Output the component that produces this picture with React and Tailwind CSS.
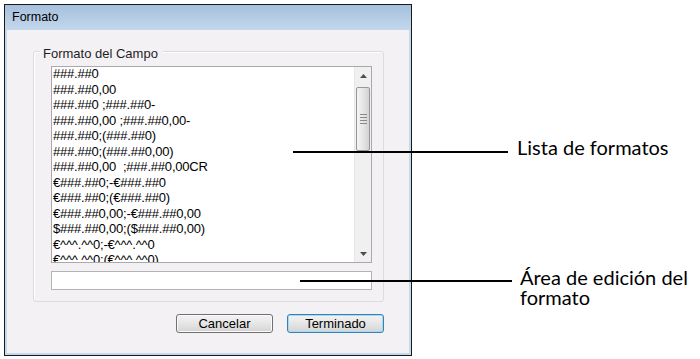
import React from 'react';

const formats = [
  '###.##0',
  '###.##0,00',
  '###.##0 ;###.##0-',
  '###.##0,00 ;###.##0,00-',
  '###.##0;(###.##0)',
  '###.##0;(###.##0,00)',
  '###.##0,00  ;###.##0,00CR',
  '€###.##0;-€###.##0',
  '€###.##0;(€###.##0)',
  '€###.##0,00;-€###.##0,00',
  '$###.##0,00;($###.##0,00)',
  '€^^^.^^0;-€^^^.^^0',
  '€^^^.^^0;(€^^^.^^0)',
];

const Arrow = ({ up }) => (
  <svg width="7" height="4" viewBox="0 0 7 4" className="block">
    {up ? <path d="M0 4 L3.5 0 L7 4 Z" fill="#4d4d4d" /> : <path d="M0 0 L3.5 4 L7 0 Z" fill="#4d4d4d" />}
  </svg>
);

const Scrollbar = () => (
  <div className="w-[17px] h-full flex flex-col bg-[#f0f0f0] border-l border-[#e8e8e8]">
    <div className="h-[17px] flex items-center justify-center">
      <Arrow up />
    </div>
    <div className="flex-1 flex flex-col pt-[3px]">
      <div className="h-[64px] mx-[1px] rounded-[2px] border border-[#979797] bg-gradient-to-r from-[#f4f4f4] via-[#e6e6e6] to-[#d2d2d2] flex flex-col items-center justify-center gap-[2px]">
        <div className="w-[7px] h-px bg-[#8a8a8a]" />
        <div className="w-[7px] h-px bg-[#8a8a8a]" />
        <div className="w-[7px] h-px bg-[#8a8a8a]" />
        <div className="w-[7px] h-px bg-[#8a8a8a]" />
      </div>
    </div>
    <div className="h-[17px] flex items-center justify-center">
      <Arrow />
    </div>
  </div>
);

const Button = ({ children, primary }) => (
  <div
    className={`w-[97px] h-[19px] rounded-[3px] border flex items-center justify-center text-[13px] leading-none text-black bg-gradient-to-b from-[#f3f3f3] via-[#e6e6e6] to-[#d4d4d4] ${
      primary ? 'border-[#3c7fb1] shadow-[inset_0_0_0_1px_#9fdcf5]' : 'border-[#707070] shadow-[inset_0_0_0_1px_#fbfbfb]'
    }`}
  >
    {children}
  </div>
);

export default function App() {
  return (
    <div className="relative w-[700px] h-[359px] bg-white overflow-hidden" style={{ fontFamily: '"Liberation Sans", Arial, sans-serif' }}>
      {/* Dialog window */}
      <div className="ml-[4px] mt-[4px] w-[408px] h-[352px] border border-[#1a1a1a] flex flex-col">
        <div className="h-[25px] bg-gradient-to-b from-[#a5bfdc] to-[#c4d8ed] flex items-center pl-[7px] text-[12.5px] text-black">
          Formato
        </div>
        <div className="flex-1 bg-[#c5d9ee] px-[2px] pb-[2px] flex">
          <div className="flex-1 bg-[#f4f1f5] flex flex-col pl-[26px] pr-[25px] pt-[21px]">
            {/* Group box */}
            <div className="h-[251px] border border-[#dcdcdc] rounded-[3px] pl-[17px] pr-[11px] shadow-[inset_1px_1px_0_#fff] flex flex-col">
              <div className="-mt-[6px] -ml-[11px] w-fit pl-[3px] pr-[5px] bg-[#f4f1f5] text-[13px] leading-[15px] text-[#1e1e1e]">Formato del Campo</div>
              <div className="mt-[5px] h-[197px] border border-[#a9a9a9] bg-white flex">
                <div className="flex-1 overflow-hidden pl-[1px] text-[13px] leading-[15.5px] text-black tracking-[-0.2px]">
                  <div className="-mt-[1px]">
                    {formats.map((f) => (
                      <div key={f} className="whitespace-pre">{f}</div>
                    ))}
                  </div>
                </div>
                <Scrollbar />
              </div>
              <div className="mt-[8px] h-[19px] border border-[#b4b4b4] bg-white" />
            </div>
            <div className="mt-[12px] flex justify-end gap-[14px]">
              <Button>Cancelar</Button>
              <Button primary>Terminado</Button>
            </div>
          </div>
        </div>
      </div>

      {/* Callouts */}
      <div className="absolute left-[293px] top-[151px] w-[215px] h-[1.5px] bg-black" />
      <div className="absolute left-[517px] top-[135px] text-[20px] leading-[24px] text-black" style={{ fontFamily: 'Lato, "Noto Sans", sans-serif' }}>
        Lista de formatos
      </div>
      <div className="absolute left-[300px] top-[280px] w-[212px] h-[1.5px] bg-black" />
      <div className="absolute left-[520px] top-[267px] text-[20px] leading-[20px] text-black" style={{ fontFamily: 'Lato, "Noto Sans", sans-serif' }}>
        <div>Área de edición del</div>
        <div>formato</div>
      </div>
    </div>
  );
}
